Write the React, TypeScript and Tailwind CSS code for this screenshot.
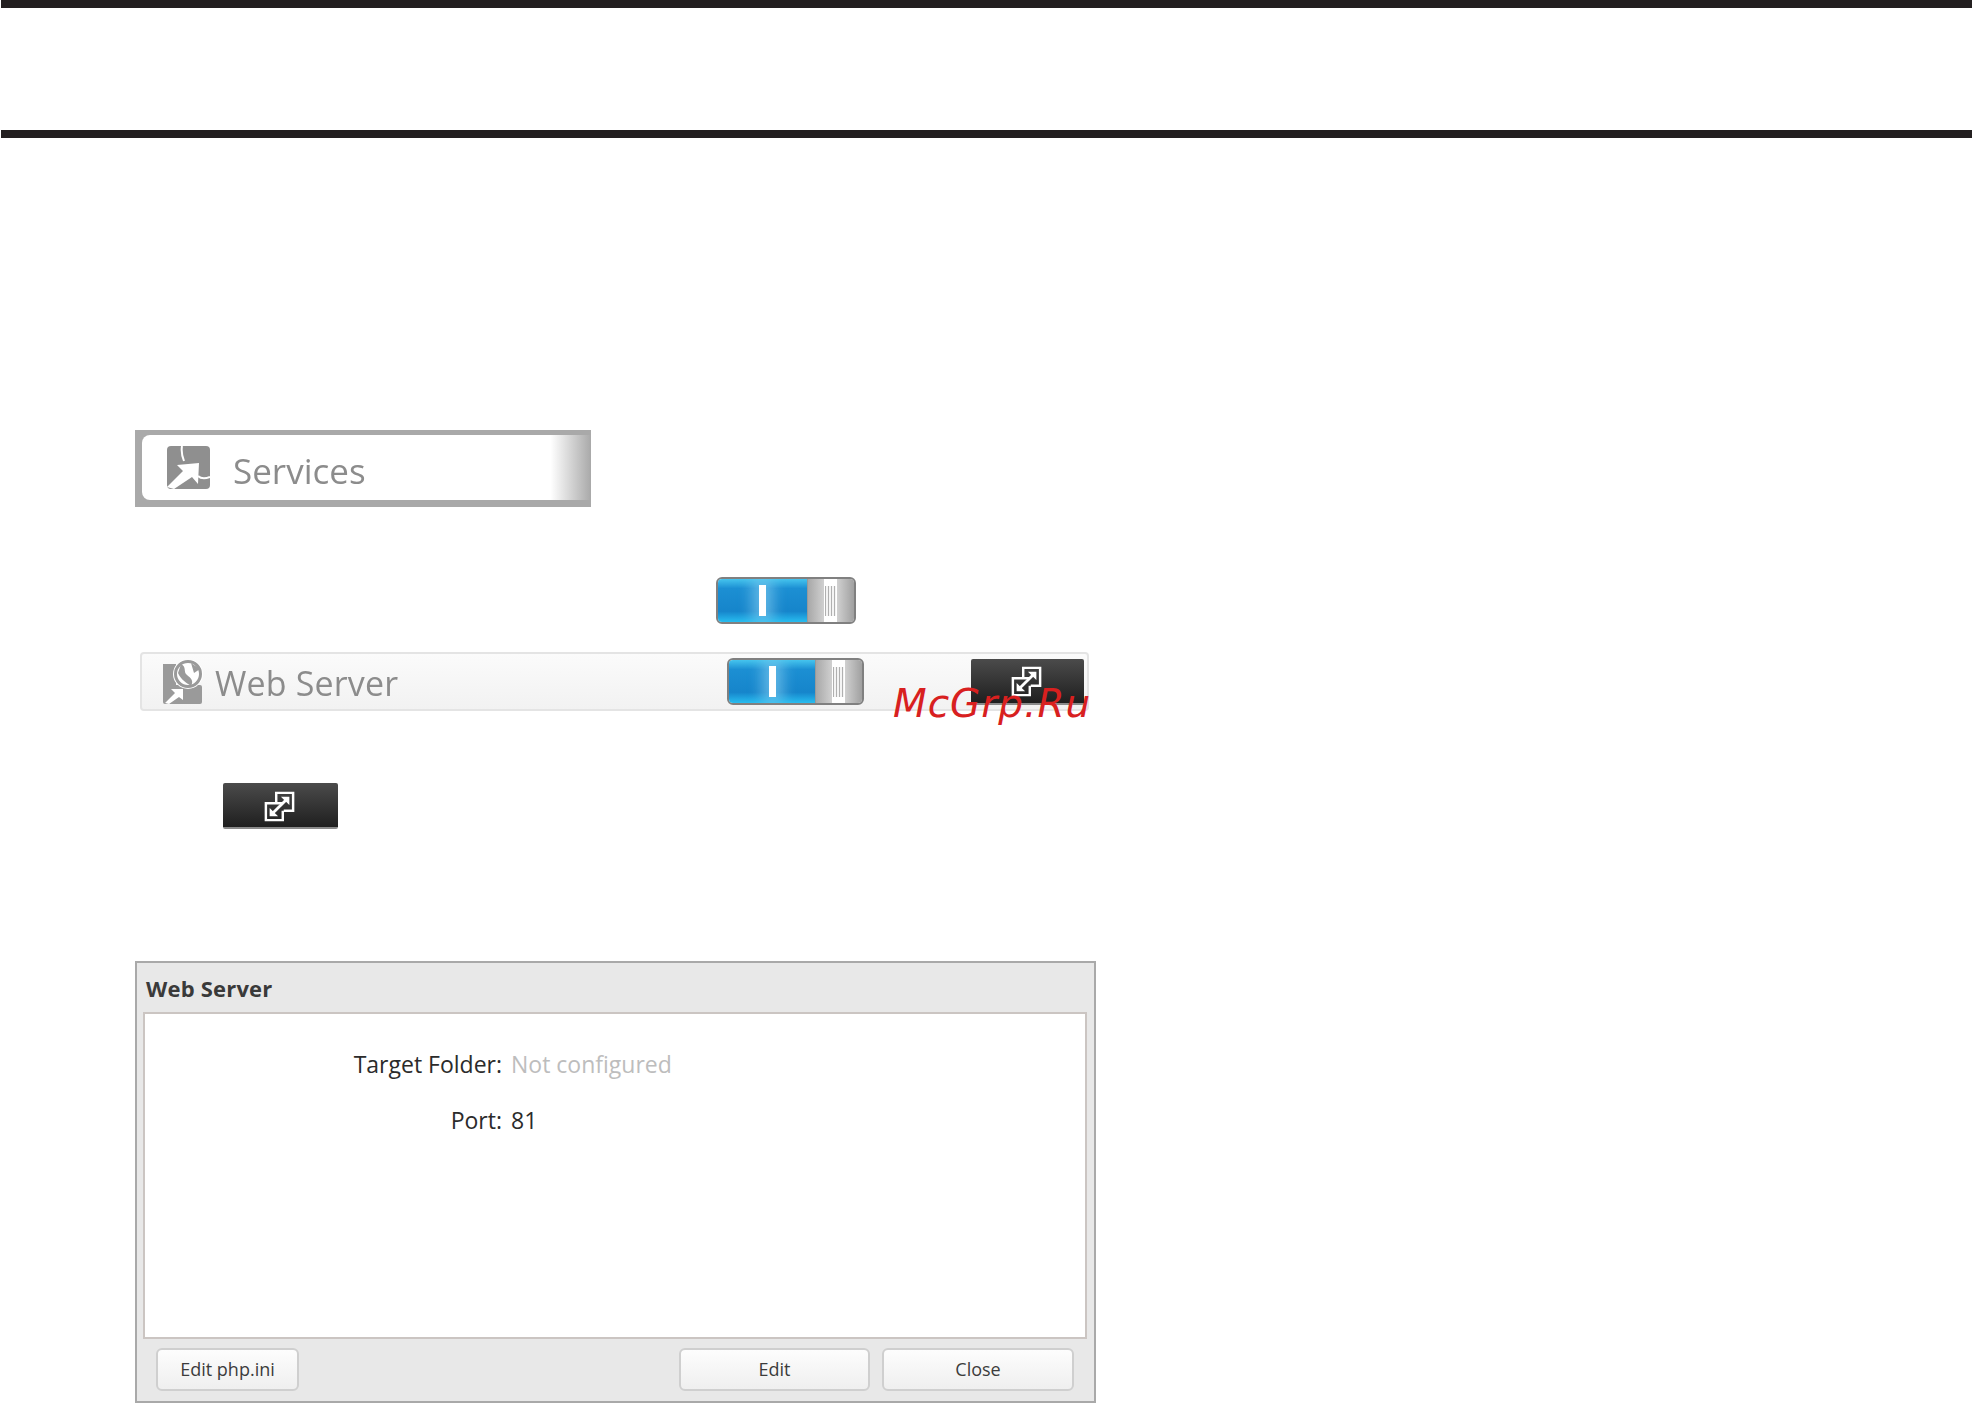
import React from 'react';

const FONT = "font-['Open_Sans','Liberation_Sans',sans-serif]";

const ServicesIcon = () => (
  <svg width="43" height="43" viewBox="0 0 43 43" className="shrink-0">
    <rect width="43" height="43" rx="4" fill="#8f8f8f" />
    <path d="M0 41 L16 25 L10 19 L32 17 L31 38 L25 31 L7 43 Z" fill="#fff" />
    <path d="M15 0 C14 6 15 10 17 15 M31 30 C34 33 38 33 43 31" stroke="#fff" strokeWidth="2" fill="none" />
  </svg>
);

const WebServerIcon = () => (
  <svg width="41" height="44" viewBox="0 0 41 44" className="shrink-0 blur-[0.4px]">
    <rect x="0" y="4" width="13" height="25" fill="#9a9a9a" />
    <rect x="0" y="25" width="39" height="19" rx="2" fill="#9a9a9a" />
    <circle cx="25" cy="14" r="15" fill="#fff" />
    <circle cx="25" cy="14" r="12.5" fill="none" stroke="#9a9a9a" strokeWidth="3" />
    <path d="M18 4 C24 7 20 12 24 15 C28 18 31 21 28 26 C24 23 18 20 15 13 Z M28 3 L37 9 L31 13 Z" fill="#9a9a9a" />
    <path d="M2 43 L12 33 L8 29 L20 29 L20 40 L16 37 L6 44 Z" fill="#fff" />
  </svg>
);

const PopupIcon = () => (
  <svg width="31" height="31" viewBox="0 0 33 33" className="shrink-0 -translate-x-px translate-y-px">
    <path d="M13 12 V2 H31 V21 H21" fill="none" stroke="#fff" strokeWidth="2.6" />
    <path d="M20 13 H2 V31 H20 V21" fill="none" stroke="#fff" strokeWidth="2.6" />
    <path d="M10 23 L24 9" stroke="#fff" strokeWidth="3" />
    <path d="M18 6 H27 V15 Z" fill="#fff" />
    <path d="M6 18 V27 H15 Z" fill="#fff" />
  </svg>
);

// on/off slider, drawn the same both times it appears
const Toggle = ({ className }: { className: string }) => (
  <div className={`flex rounded-[6px] border-2 border-[#808080] bg-[#eee] overflow-hidden blur-[0.5px] ${className}`}>
    <div className="flex-1 flex items-center justify-center overflow-hidden bg-[linear-gradient(to_bottom,#45c4ee,#1c8fd3_22%,#1685cb_75%,#28bdf0)]">
      <div className="w-[7px] h-[31px] bg-white shadow-[0_0_14px_7px_rgba(130,205,240,0.65)]" />
    </div>
    <div className="w-[47px] flex items-center justify-center border-l border-[#999] bg-[linear-gradient(to_right,#a8a8a8,#cfcfcf_34%,#fff_34%,#fff_64%,#cfcfcf_64%,#a0a0a0)]">
      <div className="w-[11px] h-[30px] -translate-x-px bg-[repeating-linear-gradient(to_right,#b0b0b0_0,#b0b0b0_1px,#f4f4f4_1px,#f4f4f4_3px)]" />
    </div>
  </div>
);

const PopupButton = ({ className }: { className: string }) => (
  <div className={`flex items-center justify-center rounded-[2px] bg-[linear-gradient(to_bottom,#4b4b4b,#1f1f1f)] border-b-2 border-[#8a8a8a] blur-[0.4px] ${className}`}>
    <PopupIcon />
  </div>
);

const DialogButton = ({ label, className }: { label: string; className: string }) => (
  <button className={`h-[43px] rounded-[6px] border-2 border-[#cfcfcf] bg-[linear-gradient(to_bottom,#fdfdfd,#efefef)] text-[18px] leading-none pb-[2px] text-[#3c3c3c] ${className}`}>
    {label}
  </button>
);

export default function App() {
  return (
    <div className={`relative w-[1972px] h-[1403px] overflow-hidden bg-white ${FONT}`}>
      <div className="h-2 ml-px bg-[#231f20]" />
      <div className="h-2 ml-px mt-[122px] bg-[#231f20]" />

      <div className="pl-[135px] pt-[292px]">
        {/* Services heading */}
        <div className="w-[456px] h-[77px] pl-[7px] pt-[5px] pb-[7px] bg-[#a9a9a9] blur-[0.4px]">
          <div className="h-full flex items-center gap-[23px] pl-[25px] rounded-l-[8px] bg-[linear-gradient(to_right,#fff_91%,#a9a9a9_100%)]">
            <ServicesIcon />
            <span className="text-[35px] leading-none text-[#8c8c8c] translate-y-[3px]">Services</span>
          </div>
        </div>

        <Toggle className="w-[140px] h-[47px] mt-[70px] ml-[581px]" />

        {/* Web Server row */}
        <div className="relative flex items-center w-[949px] h-[59px] mt-[28px] ml-[5px] rounded-[4px] border-2 border-[#e4e4e4] bg-[linear-gradient(to_bottom,#fbfbfb,#f2f2f2)]">
          <div className="flex items-center gap-[11px] pl-[21px] w-[585px]">
            <WebServerIcon />
            <span className="text-[34px] leading-none tracking-[0.15px] text-[#8c8c8c] blur-[0.4px] translate-y-px">Web Server</span>
          </div>
          <Toggle className="w-[137px] h-[47px]" />
          <PopupButton className="w-[113px] h-[46px] ml-[107px]" />
          <span className="absolute left-[751px] top-[30px] text-[39px] leading-none italic tracking-[1px] text-[#d8201f] font-['DejaVu_Sans',sans-serif]">
            McGrp.Ru
          </span>
        </div>

        <PopupButton className="w-[115px] h-[46px] mt-[72px] ml-[88px]" />

        {/* Web Server dialog */}
        <div className="flex flex-col w-[961px] h-[442px] mt-[132px] border-2 border-[#a9a9a9] bg-[#e8e8e8]">
          <div className="h-[49px] flex items-center pl-[9px] pt-[1px] text-[22px] tracking-[0.2px] font-bold text-[#3a3a3a]">Web Server</div>
          <div className="h-[327px] ml-[6px] mr-[7px] border-2 border-[#cbc5c2] bg-white text-[23px] text-[#2b2b2b]">
            <div className="grid grid-cols-[357px_1fr] gap-x-[9px] gap-y-[26px] pt-[35px] leading-[30px]">
              <div className="text-right">Target Folder:</div>
              <div className="text-[#bdbdbd]">Not configured</div>
              <div className="text-right">Port:</div>
              <div>81</div>
            </div>
          </div>
          <div className="flex pt-[9px] pl-[19px] pr-[20px]">
            <DialogButton label="Edit php.ini" className="w-[143px]" />
            <DialogButton label="Edit" className="w-[191px] ml-auto" />
            <DialogButton label="Close" className="w-[192px] ml-[12px]" />
          </div>
        </div>
      </div>
    </div>
  );
}
